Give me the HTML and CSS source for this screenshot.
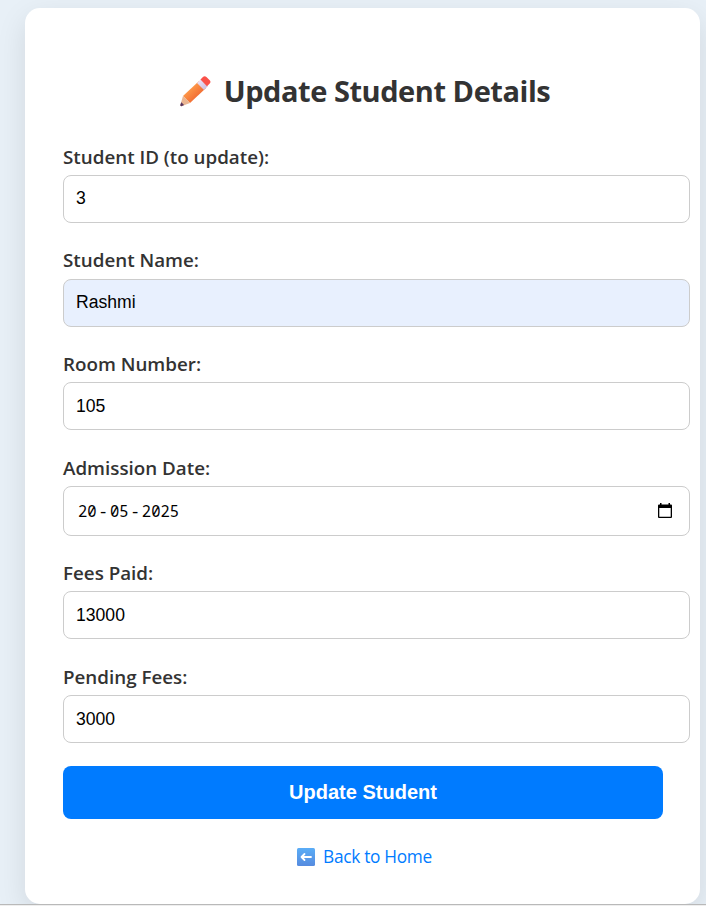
FILE: index.html
```
<!DOCTYPE html>
<html lang="en">
<head>
<meta charset="utf-8">
<title>Update Student Details</title>
<link rel="stylesheet" href="styles.css">
</head>
<body>
<main class="card">
  <h2 class="title">
    <svg class="pencil" viewBox="0 0 32 32" aria-hidden="true">
      <defs>
        <linearGradient id="wood" x1="0" y1="0" x2="1" y2="1"><stop offset="0.25" stop-color="#ffa04d"/><stop offset="0.75" stop-color="#f0652f"/></linearGradient>
        <linearGradient id="ferrule" x1="0" y1="0" x2="1" y2="1"><stop offset="0" stop-color="#f3eaff"/><stop offset="1" stop-color="#c6b7d6"/></linearGradient>
      </defs>
      <path fill="url(#wood)" d="M4 21 20 6l7 7L11 28z"/>
      <path fill="url(#ferrule)" d="m18 7.900 4-3.900 7 7-4 3.900z"/>
      <path fill="#fa5149" d="m21.500 4.500 2.700-2.700q1.600-1.400 3.200.2l3.300 3.300q1.500 1.600 0 3.200L28 11.200z"/>
      <path fill="#e9b592" d="m4 21 7 7-8.500 3.200q-1.400.1-1.100-1.400z"/>
      <path fill="#593760" d="m2.300 27.200 2.800 2.900-2.700 1.100q-1.400.1-1.100-1.400z"/>
    </svg>
    <span>Update Student Details</span>
  </h2>
  <form>
    <div class="field"><label for="sid">Student ID (to update):</label><input id="sid" type="text" value="3"></div>
    <div class="field name-field"><label for="name">Student Name:</label><input id="name" class="filled" type="text" value="Rashmi"></div>
    <div class="field"><label for="room">Room Number:</label><input id="room" type="text" value="105"></div>
    <div class="field date-field">
      <label>Admission Date:</label>
      <div class="date">
        <span class="date-value"><span>20</span><span>-</span><span>05</span><span>-</span><span>2025</span></span>
        <svg class="calendar" viewBox="0 0 16 18" aria-hidden="true"><path fill="#000" fill-rule="evenodd" d="M3 1h1.500v1.500h7V1H13v1.500h1q1 0 1 1V15q0 1-1 1H2q-1 0-1-1V3.500q0-1 1-1h1zM2.300 6v8.700h11.400V6z"/></svg>
      </div>
    </div>
    <div class="field"><label for="paid">Fees Paid:</label><input id="paid" type="text" value="13000"></div>
    <div class="field"><label for="pending">Pending Fees:</label><input id="pending" type="text" value="3000"></div>
    <button type="button">Update Student</button>
  </form>
  <a class="back" href="#">
    <svg class="arrow" viewBox="0 0 18 18" aria-hidden="true">
      <defs><linearGradient id="tile" x1="0" y1="0" x2="0" y2="1"><stop stop-color="#5aadf7"/><stop offset="1" stop-color="#568bdf"/></linearGradient></defs>
      <rect width="18" height="18" rx="1.500" fill="url(#tile)"/>
      <path d="M14 9H4.500M7.500 6l-3 3 3 3" fill="none" stroke="#fff" stroke-width="1.800" stroke-linecap="round" stroke-linejoin="round"/>
    </svg>
    <span>Back to Home</span>
  </a>
</main>
<footer class="edge"></footer>
</body>
</html>
```
FILE: styles.css
```
* { box-sizing: border-box; }
html, body { height: 100%; }
body {
  margin: 0;
  padding-top: 8px;
  overflow: hidden;
  background: #e8f0f7;
  font-family: "Segoe UI", "Open Sans", "Noto Sans", sans-serif;
  color: #333;
}
.card {
  width: 675px;
  height: 896px;
  margin-left: 25px;
  padding: 62px 38px 0;
  background: #fff;
  border-radius: 15px;
  box-shadow: 0 10px 30px rgba(0, 0, 0, 0.1);
}
.title {
  display: flex;
  align-items: center;
  justify-content: center;
  gap: 13px;
  height: 42px;
  margin: 0 -2px 33px 2px;
  font-size: 29px;
  font-weight: 700;
  letter-spacing: -0.45px;
  line-height: 42px;
  white-space: nowrap;
}
.pencil { width: 32px; height: 32px; }
.field { margin-bottom: 25.7px; }
label {
  display: block;
  height: 24px;
  margin-bottom: 6px;
  font-size: 18.8px;
  font-weight: 600;
  line-height: 25.600px;
}
.name-field label { line-height: 23.600px; }
input, .date {
  display: block;
  width: 627px;
  height: 48px;
  padding: 1px 12px 0;
  border: 1px solid #ccc;
  border-radius: 8px;
  background: #fff;
  color: #000;
  font: 17.6px "Liberation Sans", Arial, sans-serif;
}
#sid { padding: 0 12px 2px; }
.filled { padding: 0 12px 1px; background: #e8f0fe; }
.date {
  display: flex;
  align-items: center;
  justify-content: space-between;
  height: 50px;
  padding: 0 16px 0 14px;
}
.date-field { margin-bottom: 25.1px; }
.date-value {
  display: flex;
  gap: 2px;
  font: 15.5px "Noto Sans Mono", "DejaVu Sans Mono", monospace;
}
.calendar { width: 16px; height: 18px; }
button {
  display: block;
  width: 600px;
  height: 53px;
  margin-top: -2.500px;
  padding: 0 0 1px;
  border: 0;
  border-radius: 8px;
  background: #007bff;
  color: #fff;
  font: 700 20px "Liberation Sans", Arial, sans-serif;
}
.back {
  display: flex;
  align-items: center;
  justify-content: center;
  gap: 8px;
  height: 26px;
  margin: 24.500px -2px 0 2px;
  color: #007bff;
  font-size: 17.300px;
  letter-spacing: -0.3px;
  line-height: 24px;
  text-decoration: none;
}
.arrow { width: 18px; height: 18px; }
.edge {
  position: relative;
  height: 2px;
  border-top: 1px solid #b9b9b9;
  background: #eee;
}
```
